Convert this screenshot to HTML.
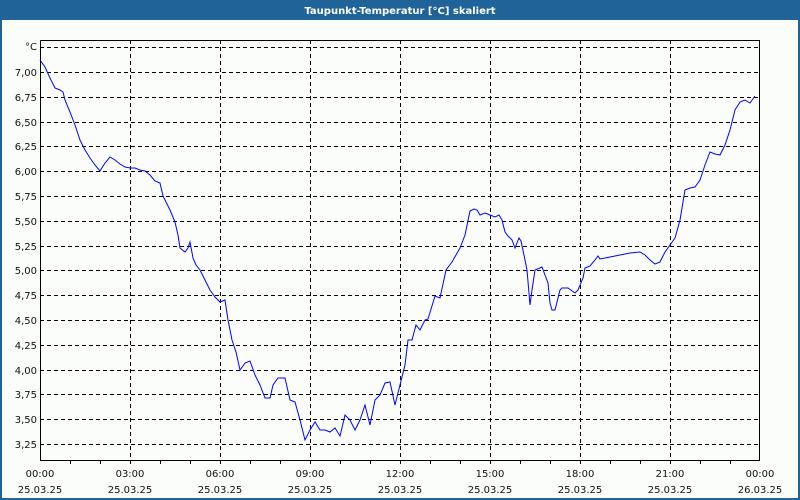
<!DOCTYPE html>
<html><head><meta charset="utf-8"><style>
html,body{margin:0;padding:0;width:800px;height:500px;overflow:hidden;background:#fbfdfb}
svg{display:block}
text{font-family:"DejaVu Sans","Liberation Sans",sans-serif;font-size:10px;fill:#111}
</style></head><body>
<svg width="800" height="500" viewBox="0 0 800 500" xmlns="http://www.w3.org/2000/svg">
<rect x="0" y="0" width="800" height="500" fill="#1f6399"/>
<rect x="2" y="20" width="796" height="478" fill="#fbfdfb"/>
<text x="400" y="14" text-anchor="middle" style="fill:#fff;font-weight:bold;font-size:10px">Taupunkt-Temperatur [°C] skaliert</text>
<g stroke="#000" stroke-width="1" stroke-dasharray="4,3" shape-rendering="crispEdges">
<line x1="40" x2="760" y1="47.5" y2="47.5"/>
<line x1="40" x2="760" y1="72.5" y2="72.5"/>
<line x1="40" x2="760" y1="97.5" y2="97.5"/>
<line x1="40" x2="760" y1="122.5" y2="122.5"/>
<line x1="40" x2="760" y1="146.5" y2="146.5"/>
<line x1="40" x2="760" y1="171.5" y2="171.5"/>
<line x1="40" x2="760" y1="196.5" y2="196.5"/>
<line x1="40" x2="760" y1="221.5" y2="221.5"/>
<line x1="40" x2="760" y1="246.5" y2="246.5"/>
<line x1="40" x2="760" y1="270.5" y2="270.5"/>
<line x1="40" x2="760" y1="295.5" y2="295.5"/>
<line x1="40" x2="760" y1="320.5" y2="320.5"/>
<line x1="40" x2="760" y1="345.5" y2="345.5"/>
<line x1="40" x2="760" y1="370.5" y2="370.5"/>
<line x1="40" x2="760" y1="394.5" y2="394.5"/>
<line x1="40" x2="760" y1="419.5" y2="419.5"/>
<line x1="40" x2="760" y1="444.5" y2="444.5"/>
<line x1="130.5" x2="130.5" y1="40" y2="461"/>
<line x1="220.5" x2="220.5" y1="40" y2="461"/>
<line x1="310.5" x2="310.5" y1="40" y2="461"/>
<line x1="400.5" x2="400.5" y1="40" y2="461"/>
<line x1="490.5" x2="490.5" y1="40" y2="461"/>
<line x1="580.5" x2="580.5" y1="40" y2="461"/>
<line x1="670.5" x2="670.5" y1="40" y2="461"/>
</g>
<g stroke="#000" stroke-width="1" fill="none" shape-rendering="crispEdges">
<polyline points="40.5,40.5 759.5,40.5 759.5,460.5 40.5,460.5 40.5,40.5"/>
<path d="M70.5,461v3M100.5,461v3M130.5,461v3M160.5,461v3M190.5,461v3M220.5,461v3M250.5,461v3M280.5,461v3M310.5,461v3M340.5,461v3M370.5,461v3M400.5,461v3M430.5,461v3M460.5,461v3M490.5,461v3M520.5,461v3M550.5,461v3M580.5,461v3M610.5,461v3M640.5,461v3M670.5,461v3M700.5,461v3M730.5,461v3"/>
</g>
<polyline fill="none" stroke="#0000ff" stroke-width="1" points="40,60 45,67 50,78 55,88 60,90 63,92 65,100 70,112 75,125 80,140 85,150 90,158 95,165 100,171 105,163 110,157 115,160 120,164 125,167 130,168 135,168 140,170 145,171 150,175 155,181 160,183 163,196 170,210 175,222 178,235 180,248 185,252 188,248 190,242 193,258 196,265 200,270 205,280 210,290 215,297 220,302 225,300 228,320 232,340 236,352 240,370 245,363 250,361 255,375 260,385 265,398 270,398 273,385 278,378 285,378 290,400 295,402 300,420 305,440 310,430 315,422 320,430 325,430 330,432 335,428 340,436 345,415 350,420 355,430 360,420 365,405 370,425 375,400 380,395 385,383 390,382 395,405 400,385 405,365 408,340 412,340 416,325 420,330 425,320 428,319 435,296 440,298 446,270 452,262 460,248 465,235 470,211 474,209 477,210 480,215 485,213 490,215 495,217 499,215 502,220 505,232 508,236 512,240 515,248 519,238 521,241 525,260 527,270 530,305 532,290 535,270 540,268 542,267 545,275 548,283 550,303 552,310 555,310 560,290 562,288 568,288 575,293 578,290 583,278 585,268 590,266 595,260 598,256 600,259 605,258 610,257 620,255 630,253 640,252 645,255 650,260 655,264 660,262 665,252 670,245 675,238 680,220 685,190 690,188 695,187 700,180 705,165 710,152 715,154 720,155 725,145 730,130 735,110 740,102 745,100 750,103 755,96"/>
<g text-anchor="end">
<text x="37" y="50">°C</text>
<text x="37" y="76">7,00</text>
<text x="37" y="101">6,75</text>
<text x="37" y="126">6,50</text>
<text x="37" y="150">6,25</text>
<text x="37" y="175">6,00</text>
<text x="37" y="200">5,75</text>
<text x="37" y="225">5,50</text>
<text x="37" y="250">5,25</text>
<text x="37" y="274">5,00</text>
<text x="37" y="299">4,75</text>
<text x="37" y="324">4,50</text>
<text x="37" y="349">4,25</text>
<text x="37" y="374">4,00</text>
<text x="37" y="398">3,75</text>
<text x="37" y="423">3,50</text>
<text x="37" y="448">3,25</text>
</g>
<g text-anchor="middle">
<text x="40" y="477">00:00</text><text x="40" y="493">25.03.25</text>
<text x="130" y="477">03:00</text><text x="130" y="493">25.03.25</text>
<text x="220" y="477">06:00</text><text x="220" y="493">25.03.25</text>
<text x="310" y="477">09:00</text><text x="310" y="493">25.03.25</text>
<text x="400" y="477">12:00</text><text x="400" y="493">25.03.25</text>
<text x="490" y="477">15:00</text><text x="490" y="493">25.03.25</text>
<text x="580" y="477">18:00</text><text x="580" y="493">25.03.25</text>
<text x="670" y="477">21:00</text><text x="670" y="493">25.03.25</text>
<text x="760" y="477">00:00</text><text x="760" y="493">26.03.25</text>
</g>
</svg>
</body></html>
